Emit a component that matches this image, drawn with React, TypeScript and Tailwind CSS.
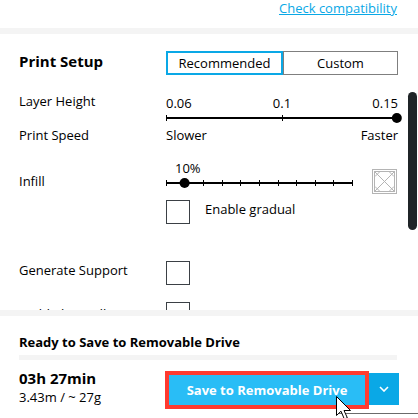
import { useState } from "react";

const Check = ({ label }: { label: string }) => (
	<input
		type="checkbox"
		aria-label={label}
		className="block size-6 shrink-0 appearance-none border border-[#3b4045] bg-white checked:bg-[#0aa8e6]"
	/>
);

const PatternIcon = () => (
	<svg viewBox="0 0 25 25" className="block size-[25px]" fill="none" stroke="#b4b4b4">
		<rect x="0.5" y="0.5" width="24" height="24" />
		<rect x="2.5" y="2.5" width="20" height="20" />
		<path d="M3 3l19 19M22 3L3 22M3 7.5L7.5 3M17.5 3L22 7.5M3 17.5L7.5 22M17.5 22l4.5-4.5" />
	</svg>
);

const Cursor = () => (
	<svg viewBox="0 0 16 24" className="pointer-events-none absolute right-[47px] top-7 h-6 w-4" aria-hidden="true">
		<path d="M0.5 0.5v19l4.5-4.3 3.3 7.8 3-1.3-3.3-7.2h6.5z" fill="#fff" stroke="#000" />
	</svg>
);

export default function App() {
	const [tab, setTab] = useState("Recommended");
	const [open, setOpen] = useState(false);

	return (
		<div className="flex h-screen flex-col overflow-hidden bg-white font-['Open_Sans','Noto_Sans',sans-serif] text-[13px] leading-[18px] text-black">
			{/* material section */}
			<div className="h-7 shrink-0 pr-[21px] text-right leading-4">
				<a href="#" className="text-[#0aa8e6] underline">
					Check compatibility
				</a>
			</div>
			<div className="h-[6px] shrink-0 bg-[#f4f4f4]" />

			{/* print setup */}
			<div className="relative min-h-0 flex-1 overflow-hidden pl-[19px] pr-5">
				<div className="mt-[17px] flex h-6">
					<h2 className="w-[147px] shrink-0 text-[15px] font-bold leading-5">Print Setup</h2>
					<div className="flex flex-1">
						{["Recommended", "Custom"].map((name) => (
							<button
								key={name}
								onClick={() => setTab(name)}
								className={
									tab === name
										? "flex-1 basis-0 border-2 border-[#0aa8e6]"
										: "flex-1 basis-0 border border-[#7f7f7f]"
								}
							>
								{name}
							</button>
						))}
					</div>
				</div>

				<div className="mt-[17px] flex h-[34px]">
					<span className="w-[147px] shrink-0">Layer Height</span>
					<div className="flex-1 pt-[2px]">
						<div className="flex justify-between">
							<span>0.06</span>
							<span>0.1</span>
							<span>0.15</span>
						</div>
						<svg className="block h-[11px] w-full overflow-visible" aria-label="Layer height slider">
							<rect y="5" width="100%" height="2" />
							<rect y="3" width="1" height="6" />
							<rect x="50%" y="3" width="1" height="6" />
							<circle cx="99.5%" cy="6" r="5" />
						</svg>
					</div>
				</div>
				<div className="flex h-[33px]">
					<span className="w-[147px] shrink-0">Print Speed</span>
					<div className="flex flex-1 justify-between">
						<span>Slower</span>
						<span>Faster</span>
					</div>
				</div>

				<div className="flex h-[41px] pr-px">
					<span className="w-[147px] shrink-0 pt-[13px]">Infill</span>
					<div className="mr-5 flex-1">
						<div className="pl-[9px]">10%</div>
						<svg
							className="block h-[11px] w-full overflow-visible"
							aria-label="Infill slider"
							shapeRendering="crispEdges"
						>
							<rect y="5" width="100%" height="2" />
							{[0, 10, 20, 30, 40, 50, 60, 70, 80, 90, 100].map((n) => (
								<rect key={n} x={`${n}%`} y="3" width="1" height="6" />
							))}
							<circle cx="10%" cy="6" r="5" shapeRendering="auto" />
						</svg>
					</div>
					<div className="pt-[10px]">
						<PatternIcon />
					</div>
				</div>
				<label className="flex h-[61px] pl-[147px]">
					<Check label="Enable gradual" />
					<span className="ml-[15px]">Enable gradual</span>
				</label>
				<label className="flex h-[41px]">
					<span className="w-[147px] shrink-0">Generate Support</span>
					<Check label="Generate Support" />
				</label>
				<label className="flex h-[41px]">
					<span className="w-[147px] shrink-0 pt-[3px]">Build Plate Adhesion</span>
					<Check label="Build Plate Adhesion" />
				</label>

				<div className="absolute right-[1px] top-[58px] h-[138px] w-[9px] rounded-full bg-[#1f2427]" />
			</div>
			<div className="h-[6px] shrink-0 bg-[#f4f4f4]" />

			{/* save panel */}
			<div className="h-[102px] shrink-0 pl-[19px] pr-[19px] pt-[17px]">
				<p className="font-bold">Ready to Save to Removable Drive</p>
				<div className="mr-[2px] mt-1 h-[5px] bg-[#f4f4f4]" />
				<div className="flex pt-2">
					<div className="w-[146px] shrink-0">
						<p className="text-[15px] font-bold leading-5">03h 27min</p>
						<p>3.43m / ~ 27g</p>
					</div>
					<div className="relative flex flex-1 pt-[3px]">
						<button className="h-[38px] flex-1 whitespace-nowrap border-4 border-[#ff3b30] bg-[#29bdf6] font-bold text-white">
							Save to Removable Drive
						</button>
						<button
							aria-label="More outputs"
							onClick={() => setOpen(!open)}
							className="mt-[2px] flex h-8 w-[30px] items-center justify-center bg-[#0aa8e6]"
						>
							<svg viewBox="0 0 10 6" className="h-[6px] w-[10px]" fill="none" stroke="#fff" strokeWidth="1.6">
								<path d="M1 1l4 4 4-4" />
							</svg>
						</button>
						{/* top edge of the output menu, running off to the right */}
						<div className="absolute -right-[19px] left-[174px] top-[45px] h-px bg-[#6b6b6b]" />
						<Cursor />
					</div>
				</div>
			</div>
		</div>
	);
}
